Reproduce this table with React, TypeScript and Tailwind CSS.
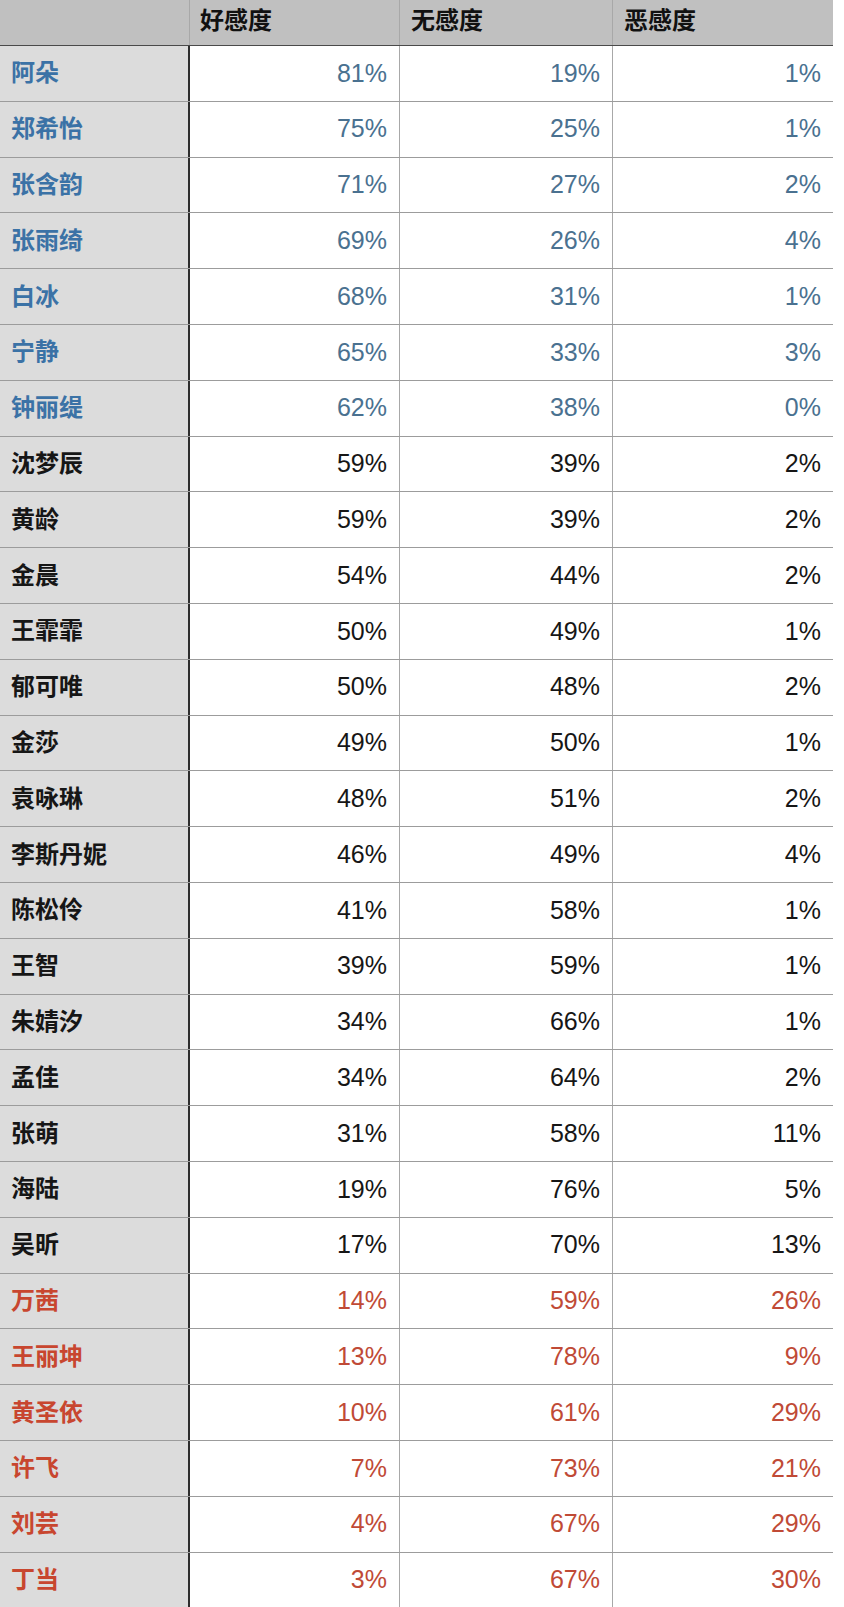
type Row = { name: string; good: number; none: number; bad: number; tone: "blue" | "black" | "red" };

const rows: Row[] = [
  { name: "阿朵", good: 81, none: 19, bad: 1, tone: "blue" },
  { name: "郑希怡", good: 75, none: 25, bad: 1, tone: "blue" },
  { name: "张含韵", good: 71, none: 27, bad: 2, tone: "blue" },
  { name: "张雨绮", good: 69, none: 26, bad: 4, tone: "blue" },
  { name: "白冰", good: 68, none: 31, bad: 1, tone: "blue" },
  { name: "宁静", good: 65, none: 33, bad: 3, tone: "blue" },
  { name: "钟丽缇", good: 62, none: 38, bad: 0, tone: "blue" },
  { name: "沈梦辰", good: 59, none: 39, bad: 2, tone: "black" },
  { name: "黄龄", good: 59, none: 39, bad: 2, tone: "black" },
  { name: "金晨", good: 54, none: 44, bad: 2, tone: "black" },
  { name: "王霏霏", good: 50, none: 49, bad: 1, tone: "black" },
  { name: "郁可唯", good: 50, none: 48, bad: 2, tone: "black" },
  { name: "金莎", good: 49, none: 50, bad: 1, tone: "black" },
  { name: "袁咏琳", good: 48, none: 51, bad: 2, tone: "black" },
  { name: "李斯丹妮", good: 46, none: 49, bad: 4, tone: "black" },
  { name: "陈松伶", good: 41, none: 58, bad: 1, tone: "black" },
  { name: "王智", good: 39, none: 59, bad: 1, tone: "black" },
  { name: "朱婧汐", good: 34, none: 66, bad: 1, tone: "black" },
  { name: "孟佳", good: 34, none: 64, bad: 2, tone: "black" },
  { name: "张萌", good: 31, none: 58, bad: 11, tone: "black" },
  { name: "海陆", good: 19, none: 76, bad: 5, tone: "black" },
  { name: "吴昕", good: 17, none: 70, bad: 13, tone: "black" },
  { name: "万茜", good: 14, none: 59, bad: 26, tone: "red" },
  { name: "王丽坤", good: 13, none: 78, bad: 9, tone: "red" },
  { name: "黄圣依", good: 10, none: 61, bad: 29, tone: "red" },
  { name: "许飞", good: 7, none: 73, bad: 21, tone: "red" },
  { name: "刘芸", good: 4, none: 67, bad: 29, tone: "red" },
  { name: "丁当", good: 3, none: 67, bad: 30, tone: "red" },
];

const nameColor = {
  blue: "text-[#3b72a6]",
  black: "text-[#161616]",
  red: "text-[#c8462f]",
};

const numColor = {
  blue: "text-[#4a7190]",
  black: "text-[#161616]",
  red: "text-[#c04a36]",
};

const font = "font-['Liberation_Sans','Noto_Sans_CJK_SC',sans-serif]";

export default function App() {
  return (
    <div className={`w-[844px] h-[1607px] overflow-hidden bg-white ${font} text-[24px]`}>
      <div className="w-[833px]">
        <div className="flex h-[46px] bg-[#c0c0c0] border-b border-[#4a4a4a] font-bold text-[#111]">
          <div className="w-[190px] border-r border-[#a8a8a8]" />
          <div className="w-[210px] border-r border-[#a8a8a8] pl-[10px] pt-[3px]">好感度</div>
          <div className="w-[213px] border-r border-[#a8a8a8] pl-[11px] pt-[3px]">无感度</div>
          <div className="flex-1 pl-[11px] pt-[3px]">恶感度</div>
        </div>
        {rows.map((r) => (
          <div key={r.name} className="flex h-[55.8px] border-b border-[#9c9c9c]">
            <div
              className={`w-[190px] flex items-center bg-[#dcdcdc] border-r-2 border-[#2e2e2e] pl-[11px] font-bold ${nameColor[r.tone]}`}
            >
              {r.name}
            </div>
            <div
              className={`w-[210px] flex items-center justify-end border-r border-[#a8a8a8] pr-[12px] text-[25px] ${numColor[r.tone]}`}
            >
              {r.good}%
            </div>
            <div
              className={`w-[213px] flex items-center justify-end border-r border-[#a8a8a8] pr-[12px] text-[25px] ${numColor[r.tone]}`}
            >
              {r.none}%
            </div>
            <div className={`flex-1 flex items-center justify-end pr-[12px] text-[25px] ${numColor[r.tone]}`}>
              {r.bad}%
            </div>
          </div>
        ))}
      </div>
    </div>
  );
}
